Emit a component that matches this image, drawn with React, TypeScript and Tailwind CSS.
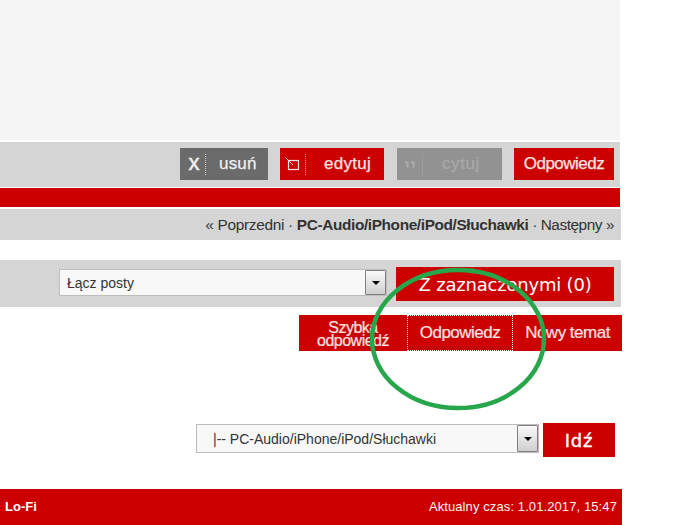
const sans = "font-['Liberation_Sans',Arial,sans-serif]";

function Arrow() {
  return (
    <div className="w-[21px] self-stretch border border-[#808080] rounded-[1px] bg-gradient-to-b from-[#fafafa] to-[#cfcfcf] flex items-center justify-center shrink-0">
      <div className="w-0 h-0 border-x-[4px] border-x-transparent border-t-[4px] border-t-black" />
    </div>
  );
}

function ActionButton({ bg, color, icon, label, width, labelClass, dot }: { bg: string; color: string; icon: React.ReactNode; label: string; width: string; labelClass: string; dot: string }) {
  return (
    <div className={`${bg} ${color} ${width} h-8 flex items-center`}>
      <div className={`w-[26px] h-[21px] border-r border-dotted ${dot} flex items-center justify-center shrink-0`}>{icon}</div>
      <span className={`${labelClass} text-[17px] [-webkit-text-stroke:0.25px]`}>{label}</span>
    </div>
  );
}

export default function App() {
  return (
    <div className={`${sans} relative w-[676px] h-[525px] overflow-hidden bg-white`}>
      <div className="w-[620px] h-[140px] bg-[#f5f5f5]" />

      <div className="mt-[2px] w-[620px] h-[45px] bg-[#d5d5d5] flex items-center justify-end pr-[6px] pb-[1px]">
        <ActionButton bg="bg-[#6b6b6b]" color="text-[#f0f0f0]" dot="border-[#d0d0d0]" width="w-[88px]" labelClass="ml-[13px] tracking-[0.2px]"
          icon={<span className="text-[22px] leading-none text-[#eeeeee] ml-[3px] -mt-[3px] [-webkit-text-stroke:0.5px]">x</span>} label="usuń" />
        <div className="ml-3">
          <ActionButton bg="bg-[#cc0000]" color="text-[#fbe3e3]" dot="border-[#f3b0b0]" width="w-[104px]" labelClass="ml-[18px] tracking-[0.3px]"
            icon={
              <svg width="16" height="14" viewBox="0 0 16 14" fill="none" stroke="#fbe3e3" strokeWidth="1.2" className="-mt-px">
                <rect x="3.5" y="3.5" width="10" height="9" />
                <path d="M0.5 0.5 L8 8" strokeWidth="1" />
              </svg>
            } label="edytuj" />
        </div>
        <div className="ml-[13px]">
          <ActionButton bg="bg-[#929292]" color="text-[#a9a9a9]" dot="border-[#a8a8a8]" width="w-[105px]" labelClass="ml-[19px] tracking-[0.6px]"
            icon={
              <svg width="12" height="8" viewBox="0 0 12 8" fill="#b0b0b0">
                <path d="M1 1.5 h3.5 v6 h-1.7 v-4.2 h-1.8 z M7 1.5 h3.5 v6 h-1.7 v-4.2 h-1.8 z" />
              </svg>
            } label="cytuj" />
        </div>
        <div className="ml-3 w-[100px] h-8 bg-[#cc0000] text-[#fbe3e3] text-[17px] tracking-[-0.5px] [-webkit-text-stroke:0.25px] flex items-center justify-center">Odpowiedz</div>
      </div>

      <div className="mt-px w-[620px] h-[19px] bg-[#cc0000]" />

      <div className="mt-[2px] w-[621px] h-[31px] bg-[#d5d5d5] flex items-center justify-end pr-[7px] text-[15.4px] text-[#333333]">
        <span className="tracking-[-0.3px]">« Poprzedni ·&nbsp;</span>
        <span className="font-bold tracking-[-0.38px]">PC-Audio/iPhone/iPod/Słuchawki</span>
        <span className="tracking-[-0.45px]">&nbsp;· Następny »</span>
      </div>

      <div className="mt-5 w-[621px] h-[47px] bg-[#d5d5d5] flex items-start">
        <div className="ml-[59px] mt-[9px] w-[328px] h-[27px] bg-[#f8f8f8] border border-[#bdbdbd] flex">
          <span className="flex-1 pl-[7px] text-[14px] leading-[27px] text-[#333333]">Łącz posty</span>
          <Arrow />
        </div>
        <div className="ml-[9px] mt-[7px] w-[218px] h-[34px] bg-[#cc0000] text-white font-['DejaVu_Sans',Verdana,sans-serif] text-[18px] tracking-[-0.2px] flex items-center justify-center">
          Z zaznaczonymi (0)
        </div>
      </div>

      <div className="mt-2 ml-[299px] w-[323px] h-9 bg-[#cc0000] text-[#fbe3e3] text-[17px] tracking-[-0.5px] [-webkit-text-stroke:0.2px] flex">
        <div className="w-[108px] flex flex-col items-center justify-center text-[16px] leading-[13px] pt-px">
          <span>Szybka</span>
          <span>odpowiedź</span>
        </div>
        <div className="w-[106px] border border-dotted border-white flex items-center justify-center">Odpowiedz</div>
        <div className="flex-1 flex items-center justify-center">Nowy temat</div>
      </div>

      <div className="mt-[72px] ml-[196px] flex items-start">
        <div className="mt-px w-[343px] h-[29px] bg-[#f8f8f8] border border-[#bdbdbd] flex">
          <span className="flex-1 pl-4 text-[14px] leading-[29px] text-[#333333]">|-- PC-Audio/iPhone/iPod/Słuchawki</span>
          <Arrow />
        </div>
        <div className="ml-1 w-[72px] h-[34px] bg-[#cc0000] text-white font-['DejaVu_Sans',Verdana,sans-serif] text-[18px] tracking-[0.8px] [-webkit-text-stroke:0.4px] flex items-center justify-center">
          Idź
        </div>
      </div>

      <div className="mt-8 w-[622px] h-9 bg-[#cc0000] flex items-center justify-between pl-[5px] pr-[5px] text-[#f5f5f5]">
        <span className="font-bold text-[13px] text-white">Lo-Fi</span>
        <span className="text-[13px] tracking-[0.1px]">Aktualny czas: 1.01.2017, 15:47</span>
      </div>

      <svg className="absolute left-[365px] top-[264px] pointer-events-none" width="186" height="150" viewBox="0 0 186 150" fill="none">
        <ellipse cx="93" cy="75" rx="86" ry="69" stroke="#27a64c" strokeWidth="4.5" />
      </svg>
    </div>
  );
}
